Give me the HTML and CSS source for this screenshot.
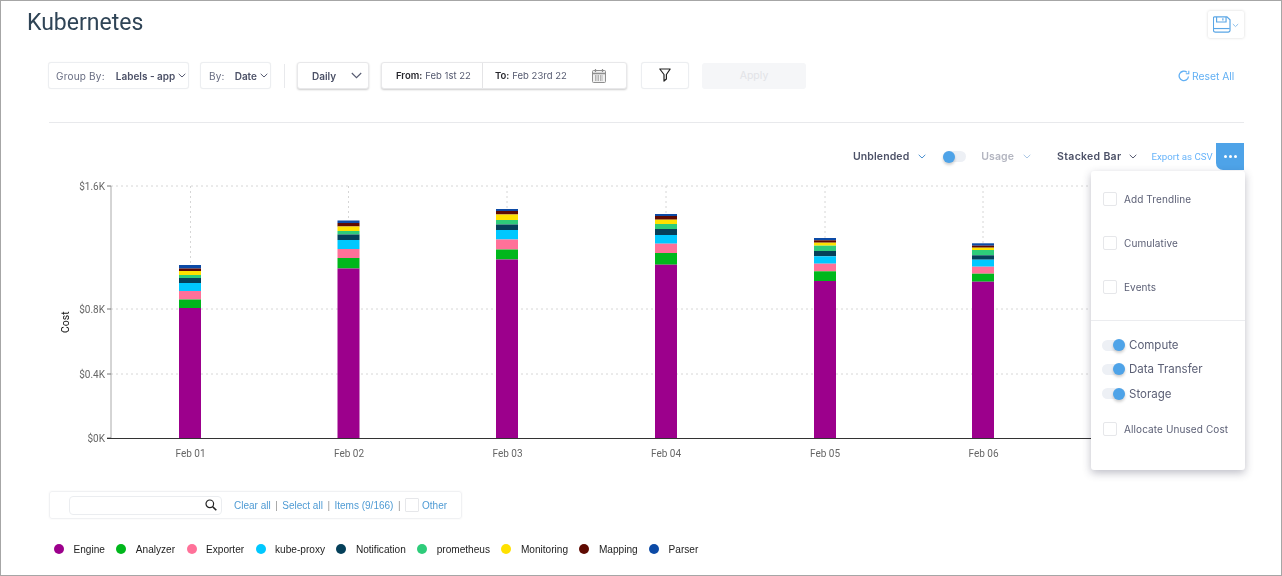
FILE: index.html
```html
<!DOCTYPE html>
<html lang="en">
<head>
<meta charset="utf-8">
<title>Kubernetes</title>
<link rel="stylesheet" href="styles.css">
</head>
<body>
<div class="frame">
  <header class="head">
    <h1 class="title">Kubernetes</h1>
    <button class="save">
      <svg width="18" height="17" viewBox="0 0 20 18" fill="none" stroke="#5aa6e6" stroke-width="1.3"><path d="M1.500.6h14l3.400 3.200v11.600a2 2 0 0 1-2 2H2.500a2 2 0 0 1-2-2V1.600a1 1 0 0 1 1-1z"/><path d="M4 .8v5.400h10.500V.8M11 2v2.600"/><path d="M1 13.500h17.500"/></svg>
      <svg class="chev" width="7" height="5" viewBox="0 0 7 5" fill="none" stroke="#8cc0ec" stroke-width="1"><path d="M.8 1l2.700 2.600L6.200 1"/></svg>
    </button>
  </header>

  <div class="toolbar">
    <div class="box group"><span class="lab">Group By:</span><b class="val">Labels - app</b><svg class="chev" width="8" height="5" viewBox="0 0 8 5" fill="none" stroke="#555a70" stroke-width="1"><path d="M.7.800L4 4 7.300.800"/></svg></div>
    <div class="box by"><span class="lab">By:</span><b class="val">Date</b><svg class="chev" width="8" height="5" viewBox="0 0 8 5" fill="none" stroke="#555a70" stroke-width="1"><path d="M.7.800L4 4 7.300.800"/></svg></div>
    <div class="sep"></div>
    <div class="box raised daily"><b class="val">Daily</b><svg class="chev" width="11" height="7" viewBox="0 0 11 7" fill="none" stroke="#555a70" stroke-width="1.100"><path d="M.8 1l4.700 4.700L10.200 1"/></svg></div>
    <div class="box raised dates">
      <div class="from"><b>From:</b> Feb 1st 22</div>
      <div class="to"><b>To:</b> Feb 23rd 22
        <svg class="cal" width="14" height="14" viewBox="0 0 14 14"><rect x=".5" y="1.500" width="13" height="12" rx="1" fill="#f0f0f0" stroke="#8e8e8e"/><path d="M.5 4.500h13" stroke="#8e8e8e" stroke-width="1.500"/><path d="M3.500 0v3M10.500 0v3" stroke="#8e8e8e" stroke-width="1.200"/><path d="M3 7h8M3 9h8M3 11h8" stroke="#777" stroke-dasharray="1.500 1" stroke-width="1.200"/></svg>
      </div>
    </div>
    <div class="box filter"><svg width="12" height="14" viewBox="0 0 12 14" fill="none" stroke="#222" stroke-width="1.200"><path d="M.8 1h10.400L7.400 6.500V11L5 13V6.500z" stroke-linejoin="round"/></svg></div>
    <button class="apply">Apply</button>
    <a class="reset"><svg width="12" height="12" viewBox="0 0 12 12" fill="none" stroke="#62b0f4" stroke-width="1.300"><path d="M10.500 6.500A4.700 4.700 0 1 1 8.900 2.300"/><path d="M10.800 .8v3H7.800" stroke-width="1.100"/></svg>Reset All</a>
  </div>

  <div class="rule"></div>

  <div class="chart-controls">
    <b class="ctl first">Unblended</b>
    <svg class="cc" width="8" height="5" viewBox="0 0 8 5" fill="none" stroke="#4a90d0" stroke-width="1"><path d="M.7.800L4 4 7.300.800"/></svg>
    <span class="toggle off"><i></i></span>
    <b class="ctl muted">Usage</b>
    <svg class="cu" width="8" height="5" viewBox="0 0 8 5" fill="none" stroke="#a9c6e4" stroke-width="1"><path d="M.7.800L4 4 7.300.800"/></svg>
    <b class="ctl stacked">Stacked Bar</b>
    <svg class="cs" width="8" height="5" viewBox="0 0 8 5" fill="none" stroke="#555a70" stroke-width="1"><path d="M.7.800L4 4 7.300.800"/></svg>
    <a class="export">Export as CSV</a>
    <button class="more"><i></i><i></i><i></i></button>
  </div>

  <div class="chart">
    <svg width="1195" height="300" viewBox="49 172 1195 300">
      <g class="grid">
        <path d="M111 186H1244M111 309H1244M111 374H1244"/>
        <path d="M190.500 186V266M348.500 186V221M507 186V209M666 186V214M825 186V238M983 186V243"/>
      </g>
      <path d="M111 186V438.500" stroke="#aaa" stroke-width="1" fill="none"/>
      <path d="M107 186h4M107 309h4M107 374h4M107 438h4" stroke="#777" fill="none"/>
      <path d="M107 438.500H1100" stroke="#333" fill="none"/>
      <g class="ytick">
        <text x="105" y="190">$1.6K</text>
        <text x="105" y="313">$0.8K</text>
        <text x="105" y="378">$0.4K</text>
        <text x="105" y="442">$0K</text>
      </g>
      <text class="ylab" transform="translate(69 333) rotate(-90)">Cost</text>

      <g>
        <rect x="179" y="265" width="22" height="3.500" fill="#0c4aa6"/><rect x="179" y="268.500" width="22" height="2.500" fill="#5f0a02"/><rect x="179" y="271" width="22" height="4" fill="#ffe100"/><rect x="179" y="275" width="22" height="3" fill="#2ecc7a"/><rect x="179" y="278" width="22" height="5" fill="#05405a"/><rect x="179" y="283" width="22" height="8" fill="#00c8ff"/><rect x="179" y="291" width="22" height="8.500" fill="#ff7199"/><rect x="179" y="299.500" width="22" height="8.500" fill="#00b71c"/><rect x="179" y="308" width="22" height="130" fill="#9c008c"/>
      </g>
      <g>
        <rect x="337.500" y="220.500" width="22" height="2.500" fill="#0c4aa6"/><rect x="337.500" y="223" width="22" height="3.500" fill="#5f0a02"/><rect x="337.500" y="226.500" width="22" height="4.500" fill="#ffe100"/><rect x="337.500" y="231" width="22" height="3.500" fill="#2ecc7a"/><rect x="337.500" y="234.500" width="22" height="5.500" fill="#05405a"/><rect x="337.500" y="240" width="22" height="9" fill="#00c8ff"/><rect x="337.500" y="249" width="22" height="9" fill="#ff7199"/><rect x="337.500" y="258" width="22" height="10.500" fill="#00b71c"/><rect x="337.500" y="268.500" width="22" height="169.500" fill="#9c008c"/>
      </g>
      <g>
        <rect x="496" y="209" width="22" height="2" fill="#0c4aa6"/><rect x="496" y="211" width="22" height="3.500" fill="#5f0a02"/><rect x="496" y="214.500" width="22" height="5.500" fill="#ffe100"/><rect x="496" y="220" width="22" height="4.500" fill="#2ecc7a"/><rect x="496" y="224.500" width="22" height="5.500" fill="#05405a"/><rect x="496" y="230" width="22" height="9.500" fill="#00c8ff"/><rect x="496" y="239.500" width="22" height="10" fill="#ff7199"/><rect x="496" y="249.500" width="22" height="10" fill="#00b71c"/><rect x="496" y="259.500" width="22" height="178.500" fill="#9c008c"/>
      </g>
      <g>
        <rect x="655" y="214" width="22" height="2" fill="#0c4aa6"/><rect x="655" y="216" width="22" height="3.700" fill="#5f0a02"/><rect x="655" y="219.700" width="22" height="4.300" fill="#ffe100"/><rect x="655" y="224" width="22" height="5" fill="#2ecc7a"/><rect x="655" y="229" width="22" height="6" fill="#05405a"/><rect x="655" y="235" width="22" height="8.700" fill="#00c8ff"/><rect x="655" y="243.700" width="22" height="9.300" fill="#ff7199"/><rect x="655" y="253" width="22" height="11.700" fill="#00b71c"/><rect x="655" y="264.700" width="22" height="173.300" fill="#9c008c"/>
      </g>
      <g>
        <rect x="814" y="238" width="22" height="2.300" fill="#0c4aa6"/><rect x="814" y="240.300" width="22" height="2.400" fill="#5f0a02"/><rect x="814" y="242.700" width="22" height="3" fill="#ffe100"/><rect x="814" y="245.700" width="22" height="5.300" fill="#2ecc7a"/><rect x="814" y="251" width="22" height="5.300" fill="#05405a"/><rect x="814" y="256.300" width="22" height="7.400" fill="#00c8ff"/><rect x="814" y="263.700" width="22" height="7.600" fill="#ff7199"/><rect x="814" y="271.300" width="22" height="9.700" fill="#00b71c"/><rect x="814" y="281" width="22" height="157" fill="#9c008c"/>
      </g>
      <g>
        <rect x="972" y="243.300" width="22" height="2.400" fill="#0c4aa6"/><rect x="972" y="245.700" width="22" height="2" fill="#5f0a02"/><rect x="972" y="247.700" width="22" height="2.300" fill="#ffe100"/><rect x="972" y="250" width="22" height="5.300" fill="#2ecc7a"/><rect x="972" y="255.300" width="22" height="4.400" fill="#05405a"/><rect x="972" y="259.700" width="22" height="7" fill="#00c8ff"/><rect x="972" y="266.700" width="22" height="7" fill="#ff7199"/><rect x="972" y="273.700" width="22" height="8" fill="#00b71c"/><rect x="972" y="281.700" width="22" height="156.300" fill="#9c008c"/>
      </g>

      <g class="xtick">
        <text x="190.500" y="457">Feb 01</text>
        <text x="349" y="457">Feb 02</text>
        <text x="507.500" y="457">Feb 03</text>
        <text x="666" y="457">Feb 04</text>
        <text x="825" y="457">Feb 05</text>
        <text x="983.500" y="457">Feb 06</text>
      </g>
    </svg>
  </div>

  <aside class="panel">
    <section class="checks">
      <label class="chk"><i></i>Add Trendline</label>
      <label class="chk"><i></i>Cumulative</label>
      <label class="chk"><i></i>Events</label>
    </section>
    <section class="toggles">
      <div class="row"><span class="toggle on"><i></i></span>Compute</div>
      <div class="row"><span class="toggle on"><i></i></span>Data Transfer</div>
      <div class="row"><span class="toggle on"><i></i></span>Storage</div>
      <label class="chk alloc"><i></i>Allocate Unused Cost</label>
    </section>
  </aside>

  <div class="filterbar">
    <div class="search"><svg width="12" height="12" viewBox="0 0 12 12" fill="none" stroke="#222" stroke-width="1.200"><circle cx="4.800" cy="4.800" r="3.800"/><path d="M7.700 7.700l3.600 3.600" stroke-width="1.600"/></svg></div>
    <a>Clear all</a><span class="pipe">|</span><a>Select all</a><span class="pipe">|</span><a>Items (9/166)</a><span class="pipe">|</span><i class="cb"></i><a>Other</a>
  </div>

  <ul class="legend">
    <li><i class="c1"></i>Engine</li>
    <li><i class="c2"></i>Analyzer</li>
    <li><i class="c3"></i>Exporter</li>
    <li><i class="c4"></i>kube-proxy</li>
    <li><i class="c5"></i>Notification</li>
    <li><i class="c6"></i>prometheus</li>
    <li><i class="c7"></i>Monitoring</li>
    <li><i class="c8"></i>Mapping</li>
    <li><i class="c9"></i>Parser</li>
  </ul>
</div>
</body>
</html>
```

FILE: styles.css
```css
* { box-sizing: border-box; }
html, body { margin: 0; padding: 0; background: #fff; }
body { width: 1282px; height: 576px; overflow: hidden; font-family: Inter, "Liberation Sans", sans-serif; color: #555a70; }
.frame { position: relative; width: 1282px; height: 576px; border: 1px solid #a6a6a6; overflow: hidden; filter: blur(0.35px); }

.head { display: flex; justify-content: space-between; align-items: flex-start; height: 61px; padding: 8px 37px 0 26px; }
.title { margin: 0; font-family: Roboto, sans-serif; font-size: 23px; line-height: 28px; font-weight: 400; color: #2f4456; }
.save { display: flex; align-items: center; gap: 1px; width: 36px; height: 27px; margin-top: 2px; padding: 0 0 0 5px; border: 0; background: #fff; box-shadow: 0 0 3px rgba(0,0,0,.16); border-radius: 2px; }
.save .chev { margin-top: 1px; }

.toolbar { display: flex; align-items: center; height: 27px; padding-left: 47px; font-size: 10px; white-space: nowrap; }
.box { display: flex; align-items: center; height: 27px; background: #fff; border: 1px solid #eceef1; border-radius: 3px; box-shadow: 0 0 1px rgba(0,0,0,.08); }
.raised { box-shadow: 0 1px 2px rgba(0,0,0,.2); border-color: #e8e8ea; }
.lab { letter-spacing: .2px; color: #666b80; }
.val { font-weight: 600; color: #4c5167; }
.group { width: 141px; padding-left: 7px; }
.group .val { margin-left: 11px; }
.group .chev { margin-left: 3px; }
.by { width: 71px; margin-left: 11px; padding-left: 8px; }
.by .val { margin-left: 10px; }
.by .chev { margin-left: 3px; }
.sep { width: 1px; height: 24px; margin-left: 13px; background: #e8e9ec; }
.daily { width: 72px; margin-left: 12px; padding: 0 6px 0 14px; justify-content: space-between; }
.dates { width: 246px; margin-left: 12px; }
.from { width: 101px; height: 100%; display: flex; align-items: center; gap: 3px; padding-left: 14px; border-right: 1px solid #e4e4e6; font-size: 9.500px; }
.from b, .to b { color: #26262c; font-weight: 600; }
.to { flex: 1; display: flex; align-items: center; gap: 3px; height: 100%; padding: 0 20px 0 12px; font-size: 9.500px; }
.cal { margin-left: auto; }
.filter { width: 48px; margin-left: 14px; justify-content: center; padding-bottom: 2px; }
.apply { width: 104px; height: 26px; margin-left: 13px; border: 0; border-radius: 3px; background: #f5f6f8; color: #e2e3e7; font: 10.500px Inter, sans-serif; }
.reset { display: flex; align-items: center; gap: 2px; margin-left: 372px; color: #62b0f4; font-size: 10.300px; }

.rule { height: 1px; margin: 33px 37px 0 48px; background: #e8e9ec; }

.chart-controls { position: relative; display: flex; align-items: center; height: 27px; margin-top: 20px; padding: 0 37px 0 852px; font-size: 10.500px; white-space: nowrap; }
.ctl { font-weight: 600; letter-spacing: .1px; color: #4c5167; }
.ctl.muted { color: #b3b5c0; margin-left: 15px; }
.cc { margin-left: 9px; }
.cu { margin-left: 9px; }
.stacked { margin-left: 26px; letter-spacing: .3px; }
.cs { margin-left: 8px; }
.export { margin-left: 14px; color: #68b4fa; font: 9.700px Roboto, sans-serif; }
.more { display: flex; align-items: center; justify-content: center; gap: 2px; width: 28px; height: 27px; margin-left: auto; padding: 0; border: 0; background: #4ea3e8; border-radius: 0 0 0 7px; }
.more i { width: 3px; height: 3px; border-radius: 50%; background: #fff; }

.toggle { position: relative; display: inline-block; flex: none; width: 23px; height: 11px; border-radius: 6px; background: #edf0f5; }
.toggle i { position: absolute; top: -.5px; width: 12px; height: 12px; border-radius: 50%; background: #4ea3e8; box-shadow: 0 2px 3px rgba(0,0,0,.2); }
.toggle.off { margin-left: 17px; }
.toggle.off i { left: 0; }
.toggle.on i { right: 0; }

.chart { height: 300px; margin: 2px 0 0 48px; }
.chart svg { display: block; }
.grid path { fill: none; stroke: #d6d6d6; stroke-width: 1; stroke-dasharray: 2 3; }
.ytick text { font: 10px Roboto, sans-serif; fill: #666; text-anchor: end; }
.xtick text { font: 10px Roboto, sans-serif; fill: #666; text-anchor: middle; }
.ylab { font: 10.500px Roboto, sans-serif; fill: #111; }

.panel { position: absolute; left: 1090px; top: 170px; width: 154px; height: 299px; background: #fff; border-radius: 3px; box-shadow: 0 3px 8px rgba(40,40,70,.3); font-size: 10px; color: #5c6076; }
.checks { height: 150px; padding-top: 5.500px; border-bottom: 1px solid #ebecef; }
.chk { display: flex; align-items: center; height: 44px; padding-left: 12px; gap: 7px; letter-spacing: .1px; }
.chk i, .cb { display: block; width: 14px; height: 14px; background: #fff; border: 1px solid #e6e7ea; border-radius: 2px; }
.toggles { padding-top: 12px; }
.row { display: flex; align-items: center; gap: 4px; height: 24.300px; padding-left: 11px; font-size: 11.500px; }
.alloc { margin-top: 5px; height: 37px; }

.filterbar { position: absolute; left: 48px; top: 490px; width: 413px; height: 28px; display: flex; align-items: center; padding-left: 19px; border: 1px solid #f0f1f3; border-radius: 3px; box-shadow: 0 0 2px rgba(0,0,0,.06); font: 10px "Liberation Sans", Arial, sans-serif; color: #4f9bd4; }
.search { display: flex; align-items: center; justify-content: flex-end; width: 153px; height: 19px; margin-right: 12px; padding-right: 4px; border: 1px solid #ebedf0; border-radius: 4px; }
.pipe { margin: 0 4.500px; color: #999; }
.cb { margin-right: 3px; border-radius: 1px; }

.legend { position: absolute; left: 53px; top: 538px; display: flex; margin: 0; padding: 0; list-style: none; font: 10.100px "Liberation Sans", Arial, sans-serif; color: #222; }
.legend li { display: flex; align-items: center; height: 20px; margin-right: 11.400px; }
.legend i { width: 10px; height: 10px; margin-right: 9.500px; border-radius: 50%; }
.c1 { background: #9c008c; } .c2 { background: #00b71c; } .c3 { background: #ff7199; } .c4 { background: #00c8ff; } .c5 { background: #05405a; } .c6 { background: #2ecc7a; } .c7 { background: #ffe100; } .c8 { background: #5f0a02; } .c9 { background: #0c4aa6; }
```
